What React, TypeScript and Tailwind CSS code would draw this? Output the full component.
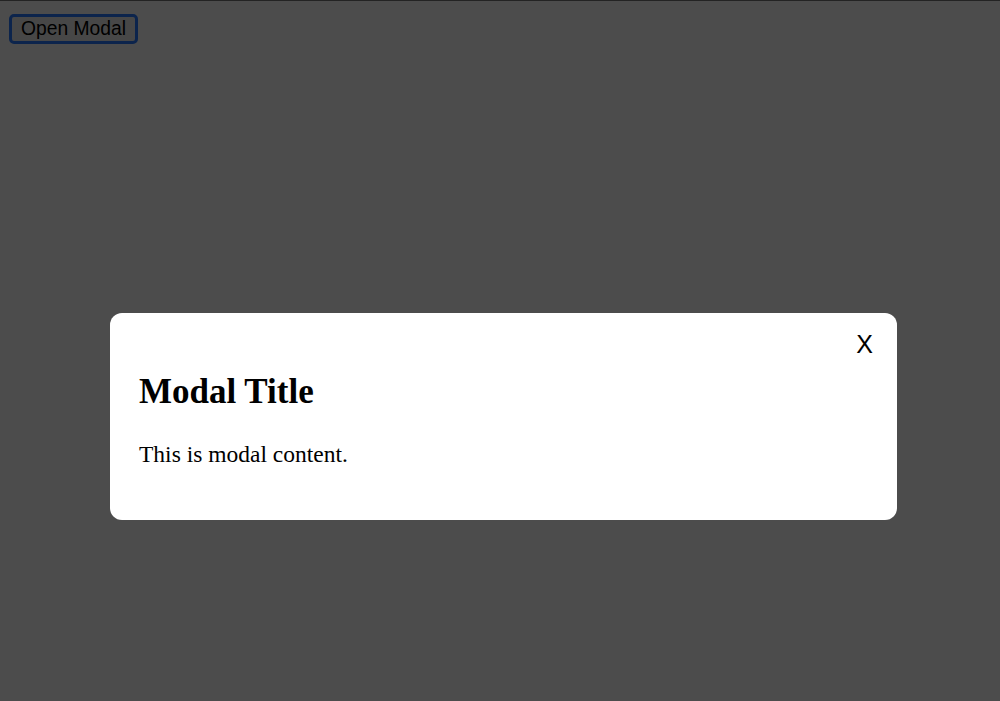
import React, { useState } from 'react';

export default function App() {
  const [open, setOpen] = useState(true);

  return (
    <div className="relative min-h-[701px] w-full bg-white border-t border-[#777]">
      <div className="pt-[13px] pl-[9px]">
        <button
          onClick={() => setOpen(true)}
          className="h-[30px] px-[9px] rounded-[5px] border-[3px] border-[#2a7aff] bg-[#efefef] text-black text-[19.3px] leading-[22px] font-['Liberation_Sans',Arial,sans-serif]"
        >
          Open Modal
        </button>
      </div>

      {open && (
        <div className="fixed inset-0 bg-black/70">
          <div className="pt-[313px] pl-[110px]">
            <div className="relative w-[787px] h-[207px] bg-white rounded-[12px] px-[29px] pt-[29px] font-['Liberation_Serif','Times_New_Roman',serif] text-black">
              <button
                onClick={() => setOpen(false)}
                className="absolute top-[19px] right-[24px] bg-transparent text-[25px] leading-[25px] font-['Liberation_Sans',Arial,sans-serif] text-black"
              >
                X
              </button>
              <h2 className="mt-[30px] text-[35px] leading-[40px] font-bold">Modal Title</h2>
              <p className="mt-[29px] text-[23.5px] leading-[27px]">This is modal content.</p>
            </div>
          </div>
        </div>
      )}
    </div>
  );
}
